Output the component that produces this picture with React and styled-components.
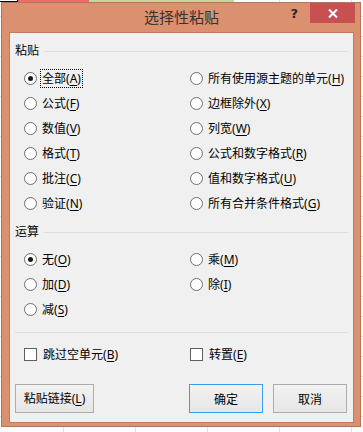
import React from "react";
import styled, { createGlobalStyle } from "styled-components";

const Global = createGlobalStyle`
  html, body {
    margin: 0;
    padding: 0;
    background: #ffffff;
  }
  body {
    font-family: "Noto Sans", "Noto Sans CJK SC", sans-serif;
    font-size: 12px;
    color: #000;
  }
`;

const Desk = styled.div`
  width: 363px;
  height: 432px;
  overflow: hidden;
  background-color: #ffffff;
  background-image: linear-gradient(to right, #e2e2e2 1px, transparent 1px),
    linear-gradient(to bottom, #e2e2e2 1px, transparent 1px);
  background-size: 72px 20px;
  background-position: -9px -4px;
`;

const Strip = styled.div`
  display: flex;
  height: 2px;
`;

const StripCell = styled.div`
  width: ${(p) => p.$w}px;
  background: ${(p) => p.$c};
  box-sizing: border-box;
  border-bottom: ${(p) => (p.$edge ? "1px solid #000" : "none")};
  border-right: ${(p) => (p.$edge ? "1px solid #000" : "none")};
`;

const Window = styled.div`
  margin-left: 1px;
  width: 360px;
  height: 425px;
  box-sizing: border-box;
  border: 1px solid #b3765a;
  background: #db906f;
  display: flex;
  flex-direction: column;
  padding: 0 6px 3px 7px;
`;

const TitleBar = styled.div`
  height: 29px;
  display: grid;
  grid-template-columns: 1fr auto 1fr;
  align-items: start;
`;

const Title = styled.div`
  grid-column: 2;
  font-family: "Noto Sans CJK SC", sans-serif;
  font-size: 15px;
  line-height: 28px;
  color: #333;
  letter-spacing: 0;
`;

const Controls = styled.div`
  grid-column: 3;
  justify-self: end;
  display: flex;
  align-items: flex-start;
  margin-right: -1px;
`;

const Help = styled.span`
  font-family: "DejaVu Sans", sans-serif;
  font-weight: bold;
  font-size: 13px;
  line-height: 15px;
  margin-top: 3px;
  color: #2a2a2a;
  margin-right: 12px;
`;

const Close = styled.div`
  width: 45px;
  height: 20px;
  background: #c75050;
  display: flex;
  align-items: center;
  justify-content: center;
`;

const Client = styled.div`
  flex: 1;
  background: #f0f0f0;
  border: 1px solid #c07a5c;
  padding: 0 5px;
  display: flex;
  flex-direction: column;
  font-family: "Noto Sans", "Noto Sans CJK SC", sans-serif;
  font-size: 12px;
`;

const Legend = styled.div`
  display: flex;
  align-items: center;
  height: 18px;
  margin-top: ${(p) => p.$top}px;
  gap: 5px;
  line-height: 18px;
  &::after {
    content: "";
    flex: 1;
    height: 1px;
    background: #dcdcdc;
  }
`;

const Grid = styled.div`
  display: grid;
  grid-template-columns: 166px 1fr;
  grid-auto-rows: 25px;
  margin-top: 6px;
  grid-auto-flow: ${(p) => (p.$cols ? "column" : "row")};
  grid-template-rows: ${(p) => (p.$cols ? `repeat(${p.$cols}, 25px)` : "none")};
`;

const Option = styled.label`
  display: flex;
  align-items: center;
  padding-left: 9px;
  white-space: nowrap;
`;

const Circle = styled.span`
  width: 13px;
  height: 13px;
  box-sizing: border-box;
  border-radius: 50%;
  border: 1px solid #6e6e6e;
  background: #fff;
  display: flex;
  align-items: center;
  justify-content: center;
  margin-right: 3px;
  flex-shrink: 0;
  &::after {
    content: "";
    width: 5px;
    height: 5px;
    border-radius: 50%;
    background: ${(p) => (p.$on ? "#1a1a1a" : "transparent")};
  }
`;

const Box = styled.span`
  width: 13px;
  height: 13px;
  box-sizing: border-box;
  border: 1px solid #5f5f5f;
  background: #fff;
  margin-right: 4px;
  flex-shrink: 0;
`;

const Text = styled.span`
  line-height: 17px;
  padding: 0 1px;
  border: 1px dotted ${(p) => (p.$focus ? "#000" : "transparent")};
`;

const Key = styled.u`
  text-decoration-thickness: 1px;
  text-underline-offset: 2px;
`;

const Divider = styled.div`
  height: 1px;
  background: #dcdcdc;
  margin-top: 10px;
`;

const CheckRow = styled.div`
  display: grid;
  grid-template-columns: 166px 1fr;
  height: 20px;
  margin-top: 11px;
`;

const Buttons = styled.div`
  display: flex;
  margin-top: 20px;
  gap: 10px;
  padding-right: 1px;
`;

const Button = styled.div`
  width: ${(p) => p.$w}px;
  height: 29px;
  box-sizing: border-box;
  border: 1px solid ${(p) => (p.$primary ? "#3c9af0" : "#adadad")};
  background: linear-gradient(#f2f2f2, #e6e6e6);
  display: flex;
  align-items: center;
  justify-content: center;
  font-size: 12px;
  margin-left: ${(p) => (p.$push ? "auto" : "0")};
`;

const Label = ({ name, k, focus }) => (
  <Text $focus={focus}>
    {name}(<Key>{k}</Key>)
  </Text>
);

const Radio = ({ name, k, on, focus }) => (
  <Option>
    <Circle $on={on} />
    <Label name={name} k={k} focus={focus} />
  </Option>
);

const pasteOpts = [
  ["全部", "A", true],
  ["公式", "F"],
  ["数值", "V"],
  ["格式", "T"],
  ["批注", "C"],
  ["验证", "N"],
  ["所有使用源主题的单元", "H"],
  ["边框除外", "X"],
  ["列宽", "W"],
  ["公式和数字格式", "R"],
  ["值和数字格式", "U"],
  ["所有合并条件格式", "G"],
];

const opOpts = [
  ["无", "O", true],
  ["加", "D"],
  ["减", "S"],
  ["乘", "M"],
  ["除", "I"],
];

export default function App() {
  return (
    <>
      <Global />
      <Desk>
        <Strip>
          <StripCell $w={18} $c="#fff" $edge />
          <StripCell $w={71} $c="#ef6b68" />
          <StripCell $w={145} $c="#c4d79b" />
        </Strip>
        <Window>
          <TitleBar>
            <Title>选择性粘贴</Title>
            <Controls>
              <Help>?</Help>
              <Close>
                <svg width="10" height="9" viewBox="0 0 10 9">
                  <path d="M1 0.5 L9 8.5 M9 0.5 L1 8.5" stroke="#fff" strokeWidth="2" />
                </svg>
              </Close>
            </Controls>
          </TitleBar>
          <Client>
            <Legend $top={9}>粘贴</Legend>
            <Grid $cols={6}>
              {pasteOpts.map(([n, k, on]) => (
                <Radio key={k} name={n} k={k} on={on} focus={on} />
              ))}
            </Grid>
            <Legend $top={7}>运算</Legend>
            <Grid $cols={3}>
              {opOpts.map(([n, k, on]) => (
                <Radio key={k} name={n} k={k} on={on} />
              ))}
            </Grid>
            <Divider />
            <CheckRow>
              <Option>
                <Box />
                <Label name="跳过空单元" k="B" />
              </Option>
              <Option>
                <Box />
                <Label name="转置" k="E" />
              </Option>
            </CheckRow>
            <Buttons>
              <Button $w={79}>
                <Label name="粘贴链接" k="L" />
              </Button>
              <Button $w={74} $primary $push>确定</Button>
              <Button $w={74}>取消</Button>
            </Buttons>
          </Client>
        </Window>
      </Desk>
    </>
  );
}
